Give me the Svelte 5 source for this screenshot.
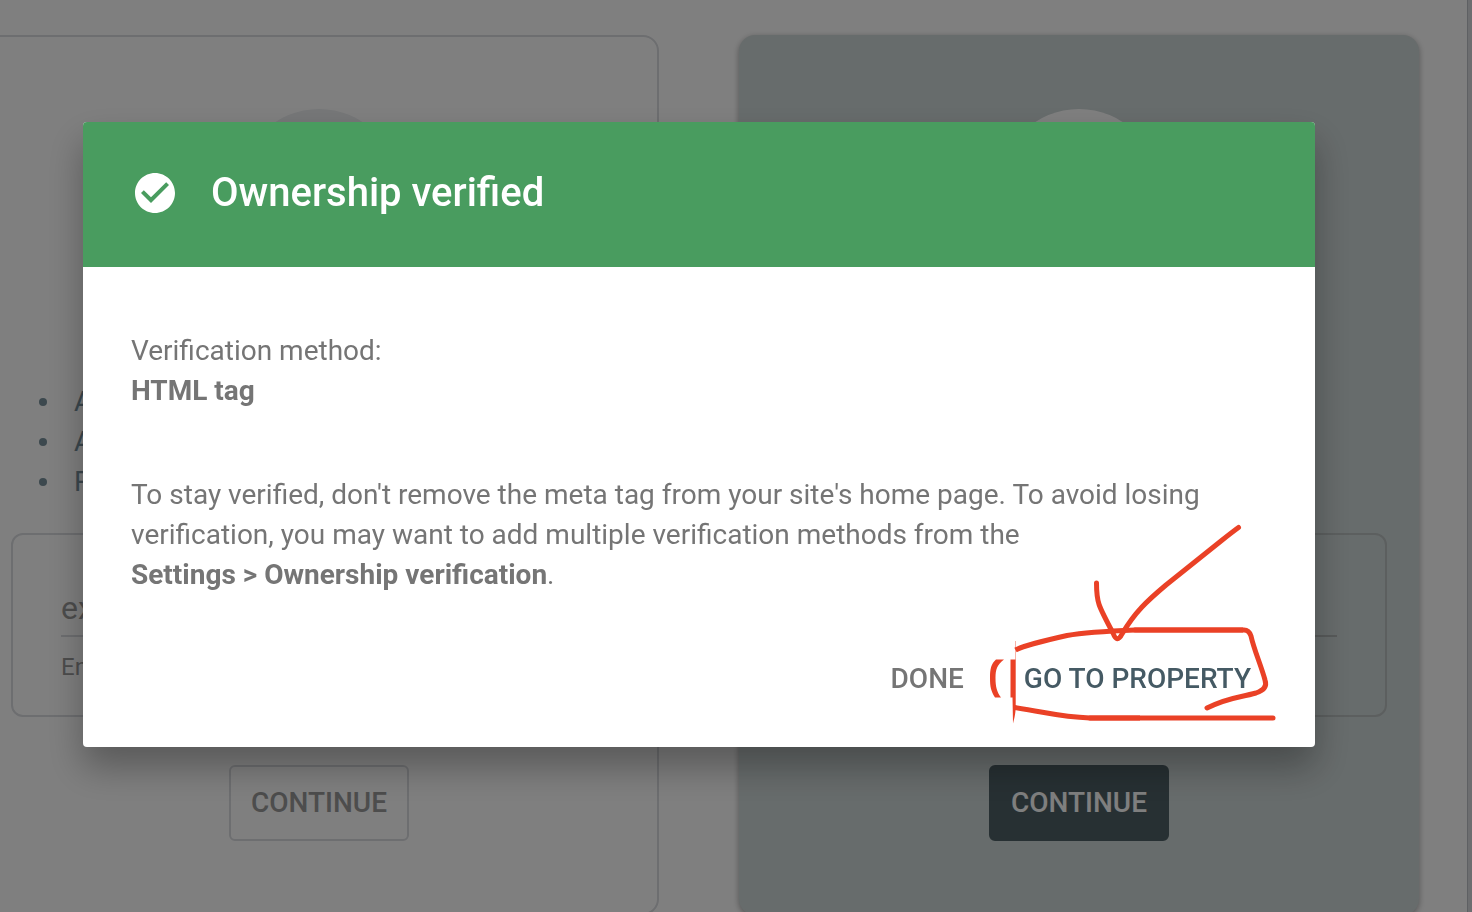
<script>
  const properties = [
    {
      id: 'domain',
      selected: false,
      placeholder: 'example.com',
      hint: 'Enter domain',
      features: ['All', 'All', 'Req']
    },
    { id: 'prefix', selected: true, placeholder: '', hint: '', features: [] }
  ];
</script>

<main class="page">
  <div class="cards">
    {#each properties as property}
      <section class="card" class:selected={property.selected}>
        <div class="circle"></div>
        {#if property.features.length}
          <ul>
            {#each property.features as feature}
              <li>{feature}</li>
            {/each}
          </ul>
        {/if}
        <div class="panel">
          <input
            id={property.id}
            type="text"
            placeholder={property.placeholder}
            aria-label="Property address"
          />
          <label for={property.id}>{property.hint}</label>
        </div>
        <button class="continue">CONTINUE</button>
      </section>
    {/each}
  </div>
  <div class="edge"></div>
</main>

<div class="overlay">
  <div class="dialog" role="dialog" aria-modal="true" aria-labelledby="dialog-title">
    <header>
      <svg class="check" viewBox="0 0 24 24" aria-hidden="true">
        <path
          fill="#fff"
          d="M12 2C6.480 2 2 6.480 2 12s4.480 10 10 10 10-4.480 10-10S17.520 2 12 2zm-2 15l-5-5 1.410-1.410L10 14.170l7.590-7.590L19 8l-9 9z"
        />
      </svg>
      <h1 id="dialog-title">Ownership verified</h1>
    </header>

    <div class="body">
      <p>Verification method:<br /><strong>HTML tag</strong></p>
      <p>
        To stay verified, don't remove the meta tag from your site's home page. To avoid losing
        verification, you may want to add multiple verification methods from the
        <br /><strong>Settings &gt; Ownership verification</strong>.
      </p>
    </div>

    <footer>
      <button class="action">DONE</button>
      <button class="action primary">GO TO PROPERTY</button>
    </footer>

    <!-- hand-drawn marks around the primary action -->
    <svg class="marks" viewBox="980 510 310 220" aria-hidden="true">
      <g fill="none" stroke="#ea4126" stroke-width="5" stroke-linecap="round" stroke-linejoin="round">
        <path d="M1096.500 583C1096.500 602 1098 605 1113 633Q1117 644 1122 634C1135 612 1147 601 1166 585L1221 541Q1231 533 1238.500 527.500" />
        <path stroke-linecap="butt" d="M1015.500 650C1025 645 1047 640 1067 635.500C1087 632 1110 631 1135 630H1243" />
        <path d="M1135 630H1244Q1249 630 1251 636C1254 650 1261 665 1265 680Q1268 689 1256 693C1238 698 1229 697 1207 708" />
        <path stroke-linecap="butt" d="M1014.500 707.500C1050 713 1060 717 1090 718H1140" />
        <path d="M1090 718H1273" />
      </g>
      <g fill="#ea4126">
        <path d="M996 659.500H1004C997 665 995.500 669 995.500 678C995.500 687 997 692 1001 697.500H995C991 691 990 687 990 678C990 669 991 664 996 659.500z" />
        <path d="M1010.500 659.500H1015.300V641H1015.700V707C1015.500 714 1014.500 718 1013 723.500L1012.500 697.500H1010.500z" />
      </g>
    </svg>
  </div>
</div>

<style>
  :global(body) {
    margin: 0;
    overflow: hidden;
    background: #fff;
    font-family: Roboto, Arial, sans-serif;
  }

  .page {
    display: flex;
    height: 100vh;
    overflow: hidden;
  }

  .cards {
    flex: 1;
    display: grid;
    grid-template-columns: 1fr 1fr;
    align-items: stretch;
    align-self: flex-start;
    gap: 80px;
    margin: 35px 48px 0 -21px;
  }

  .edge {
    width: 4px;
    border-left: 1px solid #bdc1c6;
    background: #dadce0;
  }

  .card {
    display: flex;
    flex-direction: column;
    align-items: center;
    box-sizing: border-box;
    padding: 72px 30px;
    border: 2px solid #dadce0;
    border-radius: 16px;
  }

  .card.selected {
    border-color: #cfd8d8;
    background: #cfd8d8;
    box-shadow: 0 2px 6px rgba(0, 0, 0, 0.35);
  }

  .circle {
    width: 160px;
    height: 160px;
    border-radius: 50%;
    background: #eceff1;
  }

  .selected .circle {
    background: #fff;
  }

  ul {
    align-self: stretch;
    margin: 113px 0 0;
    padding: 0 0 0 28px;
    list-style: none;
    color: #78909c;
    font-size: 28px;
    line-height: 40px;
  }

  li {
    display: flex;
    align-items: center;
    gap: 27px;
  }

  li::before {
    content: '';
    width: 8px;
    height: 8px;
    border-radius: 50%;
    background: #78909c;
  }

  .panel {
    align-self: stretch;
    box-sizing: border-box;
    height: 184px;
    margin-top: 31px;
    padding: 48px 48px 0;
    border: 2px solid #dadce0;
    border-radius: 12px;
    color: #9a9a9a;
  }

  .selected .panel {
    margin-top: auto;
    border-color: #b8bebe;
  }

  .panel input {
    display: block;
    box-sizing: border-box;
    width: 100%;
    height: 54px;
    padding: 0 0 2px;
    border: 0;
    border-bottom: 2px solid #dadce0;
    background: transparent;
    font: 32px Roboto, Arial, sans-serif;
  }

  .selected .panel input {
    border-color: #b0b5b5;
  }

  .panel input::placeholder {
    color: #9a9a9a;
  }

  .panel label {
    display: block;
    margin-top: 14px;
    font-size: 24px;
    line-height: 32px;
  }

  .continue {
    width: 180px;
    height: 76px;
    margin-top: 48px;
    padding: 0 0 2px;
    border: 2px solid #dadce0;
    border-radius: 6px;
    background: transparent;
    color: #9a9a9a;
    font: 500 28px Roboto, Arial, sans-serif;
  }

  .selected .continue {
    border-color: #4e6066;
    background: #4e6066;
    color: #fff;
  }

  .overlay {
    position: fixed;
    inset: 0;
    padding: 122px 157px 0 83px;
    background: rgba(0, 0, 0, 0.5);
  }

  .dialog {
    position: relative;
    border-radius: 4px;
    background: #fff;
    box-shadow: 0 20px 36px rgba(0, 0, 0, 0.3);
    color: #757575;
  }

  header {
    display: flex;
    align-items: center;
    gap: 32px;
    box-sizing: border-box;
    height: 145px;
    padding: 0 48px 4px;
    border-radius: 4px 4px 0 0;
    background: #499c5f;
  }

  .check {
    width: 48px;
    height: 48px;
  }

  h1 {
    margin: 0;
    color: #fff;
    font-size: 40px;
    font-weight: 500;
    line-height: 48px;
  }

  .body {
    padding: 64px 48px 48px;
    font-size: 28px;
    line-height: 40px;
  }

  p {
    margin: 0;
  }

  p + p {
    margin-top: 64px;
  }

  strong {
    font-weight: 700;
  }

  footer {
    display: flex;
    justify-content: flex-end;
    gap: 28px;
    padding: 0 48px 32px;
  }

  .action {
    height: 72px;
    padding: 0 16px 2px;
    border: 0;
    background: transparent;
    color: #757575;
    font: 500 28px Roboto, Arial, sans-serif;
  }

  .action.primary {
    color: #455a64;
  }

  .marks {
    position: absolute;
    right: 25px;
    bottom: 17px;
    width: 310px;
    height: 220px;
    pointer-events: none;
  }
</style>
